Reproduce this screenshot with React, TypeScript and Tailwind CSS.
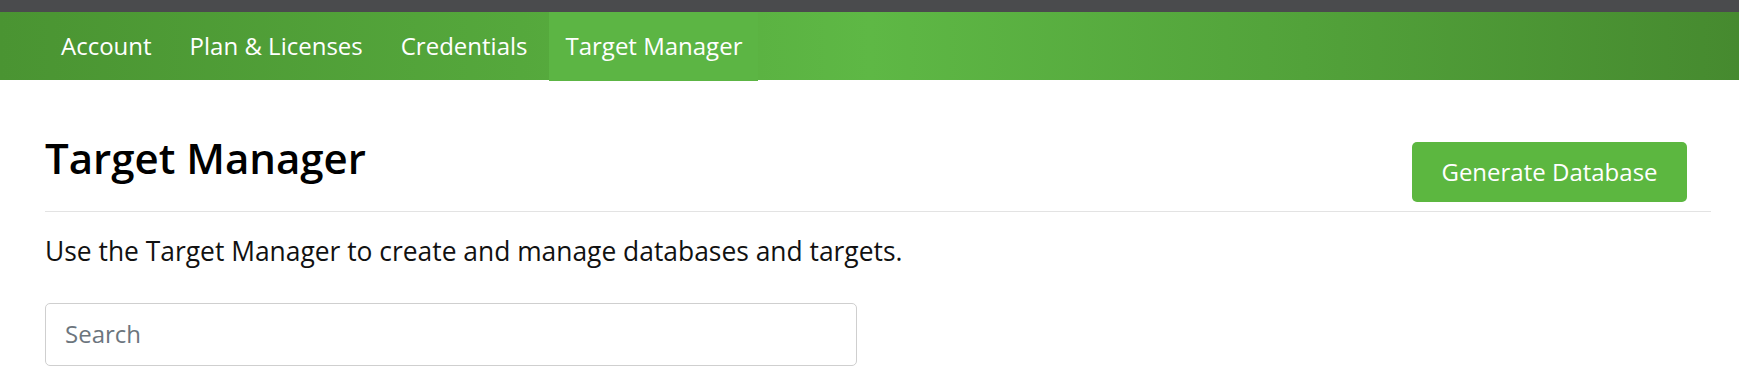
import React from "react";

export default function App() {
  const tabs = ["Account", "Plan & Licenses", "Credentials", "Target Manager"];
  return (
    <div className="w-[1739px] h-[391px] bg-white overflow-hidden" style={{ fontFamily: '"Open Sans", sans-serif' }}>
      <div className="h-[12px] bg-[#4a4b4d]" />
      <div className="h-[68px] bg-[linear-gradient(90deg,#4a9432_0%,#55a83c_30%,#5eb845_50%,#52a23a_75%,#468a2f_100%)] pl-[45px] flex">
        {tabs.map((t, i) => (
          <div
            key={t}
            className={
              "h-[69px] px-[16px] mr-[6px] flex items-center text-white text-[24px] " +
              (i === 3 ? "bg-[#5cb544]" : "")
            }
          >
            <span className="pb-[1px]">{t}</span>
          </div>
        ))}
      </div>
      <div className="pl-[45px] pr-[28px]">
        <div className="flex justify-between items-start pt-[53px]">
          <h1 className="text-[42px] leading-[1.2] font-semibold text-black">Target Manager</h1>
          <button className="mt-[9px] mr-[24px] w-[275px] h-[60px] rounded-[5px] bg-[#5cb740] text-white text-[24px]">
            Generate Database
          </button>
        </div>
        <div className="mt-[9px] h-px bg-[#e3e3e3]" />
        <p className="mt-[20px] text-[26.4px] leading-[1.5] text-[#111]">
          Use the Target Manager to create and manage databases and targets.
        </p>
        <div className="mt-[31px] w-[812px] h-[63px] border border-[#cfcfcf] rounded-[5px] flex items-center px-[19px]">
          <span className="text-[24px] text-[#6c757d]">Search</span>
        </div>
      </div>
    </div>
  );
}
